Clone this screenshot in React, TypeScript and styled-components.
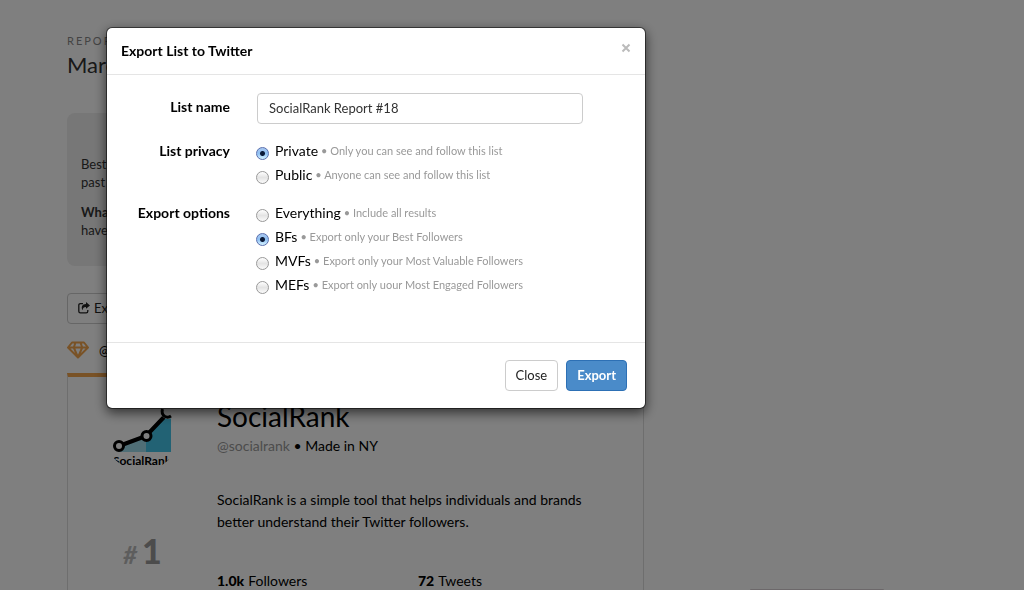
import React from "react";
import styled, { createGlobalStyle, css } from "styled-components";

const GlobalStyle = createGlobalStyle`
  * { box-sizing: border-box; }
  body {
    margin: 0;
    background: #fff;
    color: #000;
    font-family: Lato, "Liberation Sans", sans-serif;
    font-size: 14px;
    line-height: 22px;
  }
  h1, h2, p, dl, dd, fieldset { margin: 0; padding: 0; border: 0; }
  button, input { font-family: inherit; }
`;

const Page = styled.div`
  display: flex;
  justify-content: space-between;
  height: 100vh;
  overflow: hidden;
  padding: 32px 140px 0 67px;
`;

const Main = styled.main`
  flex: 0 1 577px;
  min-width: 0;
`;

const Promo = styled.aside`
  flex: 0 0 134px;
  align-self: flex-end;
  height: 1px;
  border-top: 1px solid #d8d0d4;
  border-radius: 4px 4px 0 0;
`;

const Eyebrow = styled.p`
  color: #888;
  font-size: 11px;
  line-height: 18px;
  letter-spacing: 2px;
`;

const PageTitle = styled.h1`
  color: #333;
  font-size: 22px;
  font-weight: 400;
  line-height: 30px;
`;

const Note = styled.section`
  width: 100%;
  margin-top: 33px;
  padding: 42px 14px 27px;
  border-radius: 8px;
  background: #eee;
  color: #333;
  font-size: 13px;
  line-height: 18px;

  p + p { margin-top: 12px; }
`;

const buttonBase = css`
  display: inline-flex;
  align-items: center;
  justify-content: center;
  height: 31px;
  padding: 0 10px 2px;
  border: 1px solid #ccc;
  border-radius: 4px;
  background: #fff;
  color: #222;
  font-size: 13px;
  line-height: 18px;
`;

const ExportListButton = styled.button`
  ${buttonBase}
  gap: 4px;
  margin-top: 27px;
`;

const Owner = styled.div`
  display: flex;
  align-items: center;
  gap: 10px;
  margin-top: 15px;
  height: 22px;
  font-size: 13px;
`;

const Profile = styled.article`
  display: flex;
  height: 400px;
  margin-top: 12px;
  padding-top: 19px;
  border: 1px solid #ddd;
  border-top: 4px solid #f2a44c;
`;

const ProfileSide = styled.div`
  flex: 0 0 149px;
  display: flex;
  flex-direction: column;
  align-items: center;
`;

const Rank = styled.p`
  display: flex;
  align-items: baseline;
  gap: 5px;
  margin-top: 59px;
  color: #999;
  font-size: 34px;
  font-weight: 900;
  line-height: 40px;

  span {
    color: #bbb;
    font-size: 24px;
    font-style: italic;
  }
`;

const ProfileBody = styled.div`
  flex: 1;
  min-width: 0;
  padding: 1px 40px 0 0;
`;

const Name = styled.h2`
  font-size: 28px;
  font-weight: 400;
  line-height: 38px;
`;

const Byline = styled.p`
  a { color: #999; text-decoration: none; }
`;

const Bio = styled.p`
  margin-top: 32px;
`;

const Stats = styled.dl`
  display: grid;
  grid-template-columns: 201px 1fr;
  margin-top: 37px;

  div { display: flex; flex-direction: row-reverse; justify-content: flex-end; gap: 4px; }
  dd { font-weight: 900; }
`;

const Overlay = styled.div`
  position: fixed;
  inset: 0;
  padding: 27px 106px;
  background: rgba(0, 0, 0, 0.5);
`;

const Dialog = styled.div`
  max-width: 540px;
  border: 1px solid rgba(0, 0, 0, 0.5);
  border-radius: 6px;
  background: #fff;
  background-clip: padding-box;
  box-shadow: 0 4px 12px rgba(0, 0, 0, 0.6);
`;

const DialogHeader = styled.header`
  display: flex;
  align-items: center;
  justify-content: space-between;
  height: 47px;
  padding: 0 14px;
  border-bottom: 1px solid #e5e5e5;

  h2 { font-size: 14px; font-weight: 700; line-height: 20px; }
`;

const Dismiss = styled.button`
  display: flex;
  padding: 0;
  margin-bottom: 6px;
  border: 0;
  background: none;
`;

const DialogForm = styled.form`
  padding: 18px 62px 45px 21px;
`;

const Field = styled.div`
  display: flex;
  gap: 27px;
`;

const fieldLabel = css`
  flex: 0 0 102px;
  text-align: right;
  font-size: 14px;
  font-weight: 700;
`;

const FieldLabel = styled.label`
  ${fieldLabel}
  line-height: 28px;
`;

const GroupLabel = styled.span`
  ${fieldLabel}
  line-height: 24px;
`;

const TextInput = styled.input`
  flex: 1;
  min-width: 0;
  height: 31px;
  padding: 0 11px 2px;
  border: 1px solid #ccc;
  border-radius: 4px;
  color: #333;
  font-size: 13px;
`;

const Group = styled(Field)<{ $gap: number }>`
  margin-top: ${(p) => p.$gap}px;
`;

const Choice = styled.label`
  display: flex;
  align-items: center;
  height: 24px;
  font-size: 14px;
  white-space: nowrap;

  small {
    margin-left: 3px;
    color: #999;
    font-size: 11px;
  }
`;

const Radio = styled.input`
  appearance: none;
  flex: none;
  width: 13px;
  height: 13px;
  margin: 5px 6px 0 -1px;
  border: 1px solid #999;
  border-radius: 50%;
  background: linear-gradient(#fff, #e4e4e4 50%, #fafafa);

  &:checked {
    border-color: #5a6fae;
    background:
      radial-gradient(circle, #0b1a38 0 2px, transparent 3px),
      linear-gradient(#a9c8f0, #8fc0f3 50%, #d5f3ff);
  }
`;

const DialogFooter = styled.footer`
  display: flex;
  justify-content: flex-end;
  gap: 8px;
  padding: 17px 18px;
  border-top: 1px solid #e5e5e5;
`;

const FooterButton = styled.button<{ $primary?: boolean }>`
  ${buttonBase}
  ${(p) =>
    p.$primary &&
    css`
      border-color: #2d70b5;
      background: #4a8bc9;
      color: #fff;
      font-weight: 700;
    `}
`;

type Option = { value: string; label: string; hint: string };

const privacy: Option[] = [
  { value: "private", label: "Private", hint: "Only you can see and follow this list" },
  { value: "public", label: "Public", hint: "Anyone can see and follow this list" },
];

const scopes: Option[] = [
  { value: "all", label: "Everything", hint: "Include all results" },
  { value: "bf", label: "BFs", hint: "Export only your Best Followers" },
  { value: "mvf", label: "MVFs", hint: "Export only your Most Valuable Followers" },
  { value: "mef", label: "MEFs", hint: "Export only uour Most Engaged Followers" },
];

function RadioGroup(props: { title: string; name: string; options: Option[]; initial: string; gap: number }) {
  const { title, name, options, initial, gap } = props;
  return (
    <Group $gap={gap} role="radiogroup" aria-labelledby={`${name}-title`}>
      <GroupLabel id={`${name}-title`}>{title}</GroupLabel>
      <div>
        {options.map((o) => (
          <Choice key={o.value}>
            <Radio type="radio" name={name} value={o.value} defaultChecked={o.value === initial} />
            {o.label}
            <small>• {o.hint}</small>
          </Choice>
        ))}
      </div>
    </Group>
  );
}

function ShareIcon() {
  return (
    <svg width="12" height="12" viewBox="0 0 12 12" fill="none" aria-hidden="true">
      <path d="M5 1.6H2.4Q.8 1.6.8 3.2v6Q.8 10.8 2.4 10.8h5.8q1.6 0 1.6-1.6V8" stroke="#222" strokeWidth="1.3" />
      <path d="M8 0l4 3.4L8 6.8V4.9C5.7 4.9 4.8 5.6 4.7 8.3 2.7 5.2 4 2 8 2z" fill="#222" />
    </svg>
  );
}

function DiamondIcon() {
  return (
    <svg width="22" height="18" viewBox="0 0 22 18" fill="none" stroke="#f2a44c" strokeWidth="2" strokeLinejoin="round" aria-hidden="true">
      <path d="M5 1.5h12l4 5L11 16.5 1 6.500zM1 6.5h20M8.500 1.500L6.800 6.500 11 16.500l4.200-10-1.700-5" />
    </svg>
  );
}

function Avatar() {
  return (
    <svg width="76" height="76" viewBox="1 0 76 76" role="img" aria-label="SocialRank logo">
      <defs>
        <clipPath id="avatar-round">
          <circle cx="38" cy="38" r="37" />
        </clipPath>
      </defs>
      <g clipPath="url(#avatar-round)">
        <path d="M14 50L42 41v15H14z" fill="#9fdcec" />
        <path d="M42 41L62 20h5v36H42z" fill="#45c4e8" />
        <path d="M15 50L42 40 61 20" fill="none" stroke="#000" strokeWidth="4" />
        <circle cx="15" cy="50" r="4.5" fill="#fff" stroke="#000" strokeWidth="3" />
        <circle cx="42.5" cy="40" r="4.5" fill="#fff" stroke="#000" strokeWidth="3" />
        <circle cx="64" cy="16" r="7" fill="#fff" />
        <path d="M58.5 13Q57 18 61 20.500q3 1.500 6-.5" fill="none" stroke="#000" strokeWidth="3" />
        <text x="38" y="69" textAnchor="middle" fontSize="12" fontWeight="700" fontFamily="Lato, sans-serif">
          SocialRank
        </text>
      </g>
    </svg>
  );
}

export default function App() {
  return (
    <>
      <GlobalStyle />
      <Page>
        <Main>
          <Eyebrow>REPORT</Eyebrow>
          <PageTitle>March</PageTitle>
          <Note>
            <p>Best<br />past</p>
            <p><strong>What</strong><br />have</p>
          </Note>
          <ExportListButton type="button"><ShareIcon />Export</ExportListButton>
          <Owner><DiamondIcon />@</Owner>
          <Profile>
            <ProfileSide>
              <Avatar />
              <Rank><span>#</span>1</Rank>
            </ProfileSide>
            <ProfileBody>
              <Name>SocialRank</Name>
              <Byline><a href="#socialrank">@socialrank</a> • Made in NY</Byline>
              <Bio>
                SocialRank is a simple tool that helps individuals and brands
                better understand their Twitter followers.
              </Bio>
              <Stats>
                <div><dt>Followers</dt><dd>1.0k</dd></div>
                <div><dt>Tweets</dt><dd>72</dd></div>
              </Stats>
            </ProfileBody>
          </Profile>
        </Main>
        <Promo />
      </Page>
      <Overlay>
        <Dialog role="dialog" aria-modal="true" aria-labelledby="dialog-title">
          <DialogHeader>
            <h2 id="dialog-title">Export List to Twitter</h2>
            <Dismiss type="button" aria-label="Dismiss">
              <svg width="10" height="10" viewBox="0 0 10 10" stroke="#bbb" strokeWidth="2" aria-hidden="true">
                <path d="M1.5 1.5l7 7M8.5 1.5l-7 7" />
              </svg>
            </Dismiss>
          </DialogHeader>
          <DialogForm id="export-form" onSubmit={(e) => e.preventDefault()}>
            <Field>
              <FieldLabel htmlFor="list-name">List name</FieldLabel>
              <TextInput id="list-name" type="text" defaultValue="SocialRank Report #18" />
            </Field>
            <RadioGroup title="List privacy" name="privacy" options={privacy} initial="private" gap={15} />
            <RadioGroup title="Export options" name="scope" options={scopes} initial="bf" gap={14} />
          </DialogForm>
          <DialogFooter>
            <FooterButton type="button">Close</FooterButton>
            <FooterButton type="submit" form="export-form" $primary>Export</FooterButton>
          </DialogFooter>
        </Dialog>
      </Overlay>
    </>
  );
}
